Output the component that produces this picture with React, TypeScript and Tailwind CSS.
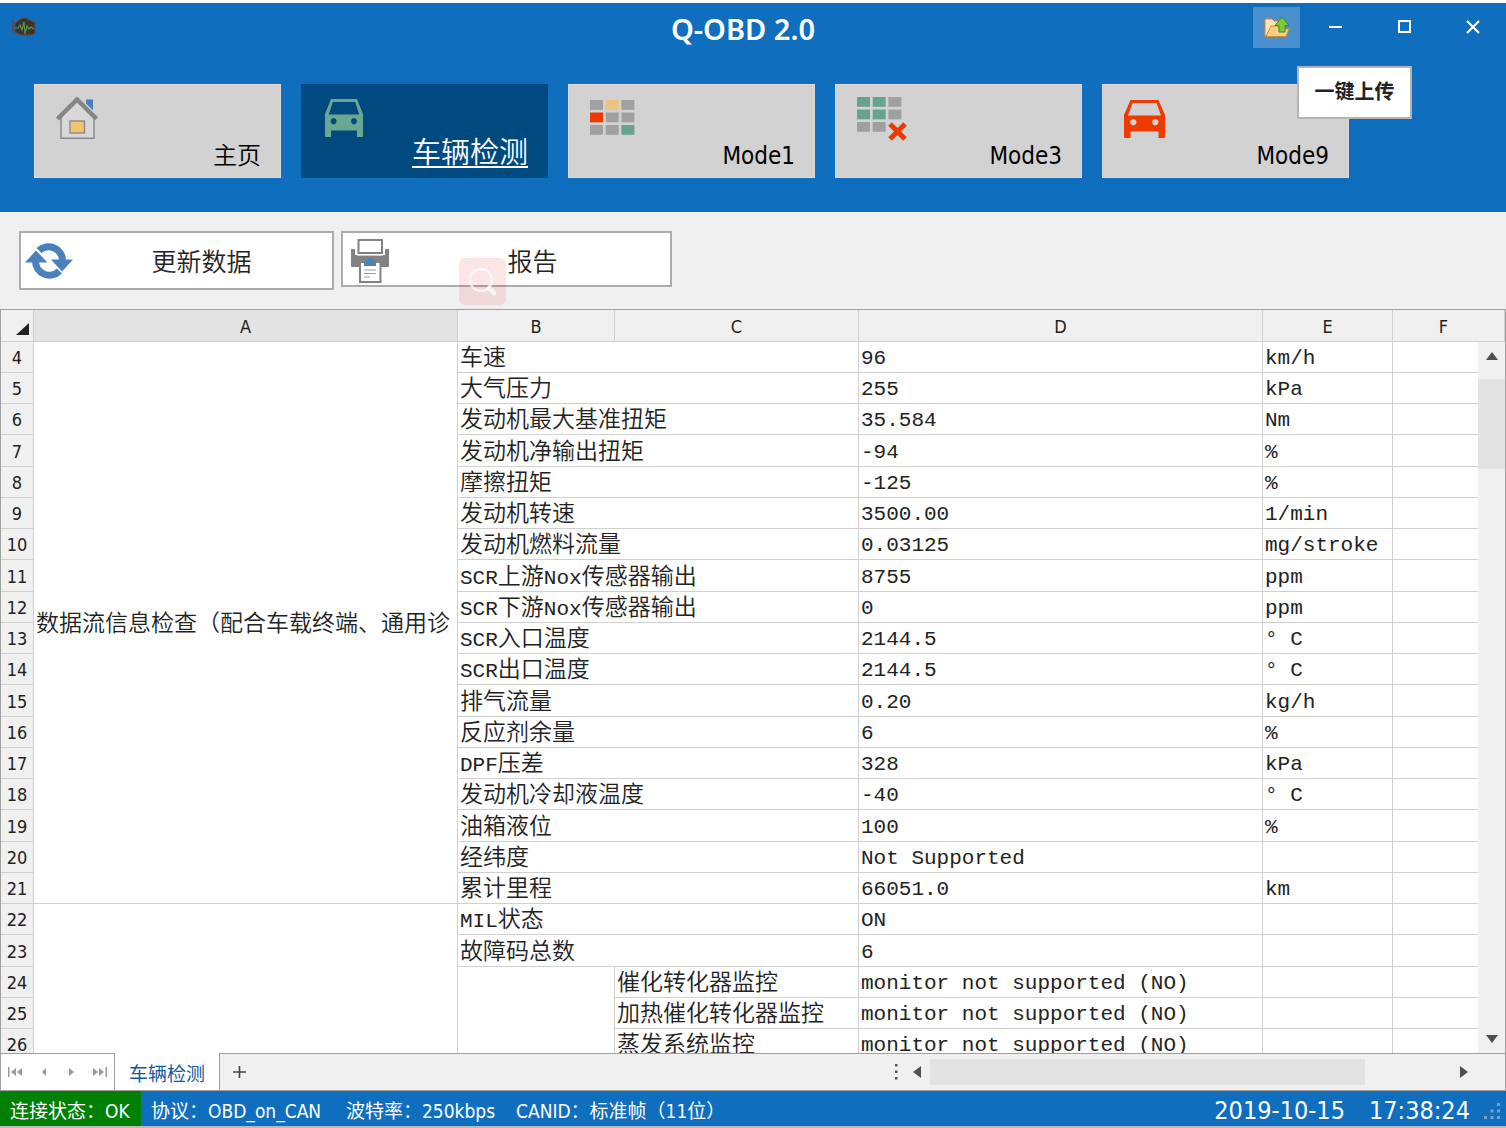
import type { ReactNode } from "react";

const UI = "font-['DejaVu_Sans_Condensed','Noto_Sans_CJK_SC',sans-serif]";

function HouseIcon() {
  return (
    <svg width="42" height="44" viewBox="0 0 42 44" aria-hidden="true">
      <path d="M30 2.5h7v11l-7-7z" fill="#4a80bb" />
      <path d="M5 20v21.3h33V20L21 4z" fill="#d8d8d8" stroke="#888" strokeWidth="1.4" />
      <path d="M1.5 22L21 2.5 40.500 22" fill="none" stroke="#878787" strokeWidth="4.500" />
      <rect x="14" y="24" width="14.500" height="12" fill="#f2c56d" stroke="#8a8a8a" strokeWidth="1.4" />
    </svg>
  );
}

function CarIcon({ color, width }: { color: string; width: number }) {
  return (
    <svg width={width} height="38" viewBox="0 0 41 38" preserveAspectRatio="none" aria-hidden="true">
      <path
        fill={color}
        fillRule="evenodd"
        d="M6.500 0h28L41 15v22q0 1-1 1h-5.500v-6.500h-28V38H1q-1 0-1-1V15zM8.500 3L4 15.500h33L32.500 3zM9.300 19a3.200 3.200 0 1 0 .01 0zM31.300 19a3.200 3.200 0 1 0 .01 0z"
      />
    </svg>
  );
}

const cells = [0, 1, 2, 3, 4, 5, 6, 7, 8];

function TilesIcon({ colors, cross }: { colors: string[]; cross?: boolean }) {
  const height = cross ? 44 : 38;
  return (
    <svg width="51" height={height} viewBox={`0 0 51 ${height}`} aria-hidden="true">
      {cells.map((i) =>
        colors[i] ? (
          <rect key={i} x={(i % 3) * 15.7} y={Math.floor(i / 3) * 12.5} width="13" height="9.8" fill={colors[i]} />
        ) : null
      )}
      {cross && <path d="M33 27l15 15M48 27L33 42" stroke="#ee3a00" strokeWidth="5" />}
    </svg>
  );
}

function EngineIcon() {
  return (
    <svg width="24" height="20" viewBox="0 0 24 20" aria-hidden="true">
      <path d="M1 3v14M1 10h3" stroke="#5f4a42" strokeWidth="1.6" />
      <path d="M3 6l3-2 2-2 3-1h3l3 2 6 2v11l-3 2H8l-5-3z" fill="#37342f" stroke="#6d4a3a" />
      <path d="M3 11h3l2-3 2 5 2-8 1 12 2-8 2 3 2-2 3 2" fill="none" stroke="#5a8f52" strokeWidth="1.2" />
    </svg>
  );
}

function UploadFolderIcon() {
  return (
    <svg width="26" height="22" viewBox="0 0 26 22" aria-hidden="true">
      <path d="M1 20V4q0-1 1-1h6l2 2h8v15z" fill="#fbe3b4" stroke="#d68a2b" />
      <path d="M2 20.500L7 10h7l3 3h8l-3 7.500z" fill="#f9cf85" stroke="#d68a2b" />
      <path d="M18 1l7 8.500h-4V16h-6V9.500h-4z" fill="#7ccb3c" stroke="#3c8a1c" />
    </svg>
  );
}

function RefreshIcon() {
  return (
    <svg width="48" height="36" viewBox="0 0 48 36" aria-hidden="true">
      <path d="M14 7.500A14 14 0 0 1 37.500 17M34.500 28A14 14 0 0 1 10.500 18" fill="none" stroke="#4a80bb" strokeWidth="7" />
      <path d="M26 16.500h22L37 28.500zM0 19.500h22.500L11 7.500z" fill="#4a80bb" />
    </svg>
  );
}

function PrinterIcon() {
  return (
    <svg width="38" height="44" viewBox="0 0 38 44" aria-hidden="true">
      <path d="M0 10h4v6h30v-6h4v17q0 1-1 1H1q-1 0-1-1z" fill="#828282" />
      <rect x="7.500" y="1" width="23.500" height="13" fill="#fff" stroke="#828282" strokeWidth="2" />
      <path d="M6 15.800h26" stroke="#fff" strokeWidth="1.600" />
      <rect x="9" y="23" width="20.500" height="20" fill="#fff" stroke="#828282" strokeWidth="2" />
      <path d="M13 27v-5h3q0-3 3-3t3 3h3v5z" fill="#4a80bb" />
      <path d="M13 31h12M13 34.500h12M13 38h6" stroke="#a0a0a0" strokeWidth="1.2" />
    </svg>
  );
}

function Triangle({ d, color = "#4f4f4f" }: { d: string; color?: string }) {
  return (
    <svg width="14" height="12" viewBox="0 0 14 12" aria-hidden="true">
      <path d={d} fill={color} />
    </svg>
  );
}

function Tile({ icon, label, active }: { icon: ReactNode; label: string; active?: boolean }) {
  return (
    <button
      className={
        active
          ? "flex h-[94px] w-[247px] flex-col items-start bg-[#004a80] pt-3 pr-5 pl-6 text-white"
          : "flex h-[94px] w-[247px] flex-col items-start border border-[#dfd8d2] bg-[#d2d2d2] pt-3 pr-[19px] pl-[21px] text-black"
      }
    >
      <span className="flex h-11 items-center">{icon}</span>
      <span
        className={
          active ? "self-end border-b-2 border-white text-[29px] leading-[26px] font-[350]" : "self-end text-2xl leading-[30px] font-[350]"
        }
      >
        {label}
      </span>
    </button>
  );
}

const G = "#a0a0a0";
const R = "#ee3a00";
const N = "#68a38e";

type Row = { n: number; b?: string; c?: string; d: string; e: string };
const rows: Row[] = [
  { n: 4, b: "车速", d: "96", e: "km/h" },
  { n: 5, b: "大气压力", d: "255", e: "kPa" },
  { n: 6, b: "发动机最大基准扭矩", d: "35.584", e: "Nm" },
  { n: 7, b: "发动机净输出扭矩", d: "-94", e: "%" },
  { n: 8, b: "摩擦扭矩", d: "-125", e: "%" },
  { n: 9, b: "发动机转速", d: "3500.00", e: "1/min" },
  { n: 10, b: "发动机燃料流量", d: "0.03125", e: "mg/stroke" },
  { n: 11, b: "SCR上游Nox传感器输出", d: "8755", e: "ppm" },
  { n: 12, b: "SCR下游Nox传感器输出", d: "0", e: "ppm" },
  { n: 13, b: "SCR入口温度", d: "2144.5", e: "° C" },
  { n: 14, b: "SCR出口温度", d: "2144.5", e: "° C" },
  { n: 15, b: "排气流量", d: "0.20", e: "kg/h" },
  { n: 16, b: "反应剂余量", d: "6", e: "%" },
  { n: 17, b: "DPF压差", d: "328", e: "kPa" },
  { n: 18, b: "发动机冷却液温度", d: "-40", e: "° C" },
  { n: 19, b: "油箱液位", d: "100", e: "%" },
  { n: 20, b: "经纬度", d: "Not Supported", e: "" },
  { n: 21, b: "累计里程", d: "66051.0", e: "km" },
  { n: 22, b: "MIL状态", d: "ON", e: "" },
  { n: 23, b: "故障码总数", d: "6", e: "" },
  { n: 24, c: "催化转化器监控", d: "monitor not supported (NO)", e: "" },
  { n: 25, c: "加热催化转化器监控", d: "monitor not supported (NO)", e: "" },
  { n: 26, c: "蒸发系统监控", d: "monitor not supported (NO)", e: "" },
];

function Mixed({ text }: { text: string }) {
  return (
    <>
      {text.split(/([A-Za-z]+)/).map((part, i) =>
        /^[A-Za-z]/.test(part) ? (
          <span key={i} className="font-['Liberation_Mono',monospace] text-[21px] leading-4">
            {part}
          </span>
        ) : (
          part
        )
      )}
    </>
  );
}

const cell = "border-r border-b border-[#d0d0d0] pl-0.5 text-left leading-[26px] whitespace-nowrap";
const cjk = "pb-1 font-['Noto_Sans_CJK_SC',sans-serif] text-[23px] font-[350]";
const mono = "pt-1 font-['Liberation_Mono',monospace] text-[21px]";
const head = "h-8 border-r border-b border-[#d0d0d0] pt-0.5 text-center text-lg font-normal leading-6";

function Sheet() {
  return (
    <div className="relative min-h-0 flex-1 overflow-hidden border-t border-r border-l border-[#a0a0a0] bg-white">
      <table className="w-full table-fixed border-separate border-spacing-0 text-[#222]">
        <colgroup>
          <col className="w-[33px]" />
          <col className="w-[424px]" />
          <col className="w-[157px]" />
          <col className="w-[244px]" />
          <col className="w-[404px]" />
          <col className="w-[130px]" />
          <col />
        </colgroup>
        <thead>
          <tr className="bg-[#f0f0f0]">
            <th className={head} aria-label="全选">
              <svg className="mt-1 ml-auto mr-1" width="13" height="12" viewBox="0 0 13 12" aria-hidden="true">
                <path d="M13 0v12H0z" fill="#222" />
              </svg>
            </th>
            <th className={head + " bg-[#e3e3e3]"}>A</th>
            <th className={head}>B</th>
            <th className={head}>C</th>
            <th className={head}>D</th>
            <th className={head}>E</th>
            <th className={head + " pr-2.5"}>F</th>
          </tr>
        </thead>
        <tbody>
          {rows.map((r, i) => (
            <tr key={r.n} className={i % 4 === 3 ? "h-8" : "h-[31px]"}>
              <th className="border-r border-b border-[#d0d0d0] bg-[#f0f0f0] pt-0.5 text-center text-lg leading-6 font-normal">{r.n}</th>
              {i === 0 && (
                <td rowSpan={18} className={cell + " " + cjk}>
                  数据流信息检查（配合车载终端、通用诊
                </td>
              )}
              {i === 18 && <td rowSpan={5} className={cell} />}
              {r.b && (
                <td colSpan={2} className={cell + " " + cjk}>
                  <Mixed text={r.b} />
                </td>
              )}
              {i === 20 && <td rowSpan={3} className={cell} />}
              {r.c && <td className={cell + " " + cjk}>{r.c}</td>}
              <td className={cell + " " + mono}>{r.d}</td>
              <td className={cell + " " + mono}>{r.e}</td>
              <td className={cell} />
            </tr>
          ))}
        </tbody>
      </table>
      <div className="absolute top-8 right-0 bottom-0 flex w-[27px] flex-col items-center bg-[#f0f0f0]">
        <button className="flex h-[37px] w-full items-center justify-center pb-2.5" aria-label="向上滚动">
          <Triangle d="M7 2l6 8H1z" />
        </button>
        <div className="h-[90px] w-full bg-[#e3e3e3]" />
        <button className="mt-auto flex h-7 w-full items-center justify-center" aria-label="向下滚动">
          <Triangle d="M7 10l6-8H1z" />
        </button>
      </div>
    </div>
  );
}

function TabBar() {
  return (
    <div className="flex h-[38px] shrink-0 border-r border-b border-l border-[#a0a0a0] bg-[#f0f0f0]">
      <div className="flex w-[114px] items-center justify-between border-t border-r border-[#a0a0a0] bg-white px-1.5">
        <button aria-label="第一张">
          <svg width="16" height="12" viewBox="0 0 16 12" aria-hidden="true">
            <path d="M1 1h1.500v10H1zM9 2v8L4 6zM15 2v8l-5-4z" fill="#999" />
          </svg>
        </button>
        <button aria-label="上一张">
          <Triangle d="M9 2v8L5 6z" color="#999" />
        </button>
        <button aria-label="下一张">
          <Triangle d="M5 2v8l5-4z" color="#999" />
        </button>
        <button aria-label="最后一张">
          <svg width="16" height="12" viewBox="0 0 16 12" aria-hidden="true">
            <path d="M15 1h-1.500v10H15zM7 2v8l5-4zM1 2v8l5-4z" fill="#999" />
          </svg>
        </button>
      </div>
      <button className="w-[105px] border-r border-[#a0a0a0] bg-white pt-1 text-[19px] leading-7 text-[#0f5a9f]">车辆检测</button>
      <div className="flex flex-1 items-center border-t border-[#a0a0a0]">
        <button className="px-3 text-[#333]" aria-label="新建工作表">
          <svg width="14" height="14" viewBox="0 0 14 14" aria-hidden="true">
            <path d="M7.500 1v12M1 7h13" stroke="#444" strokeWidth="1.6" />
          </svg>
        </button>
        <div className="ml-auto flex items-center gap-3">
          <svg width="4" height="18" viewBox="0 0 4 18" aria-hidden="true">
            <path d="M1 1h2.500v2.500H1zM1 7.500h2.500V10H1zM1 14h2.500v2.500H1z" fill="#555" />
          </svg>
          <button aria-label="向左滚动">
            <Triangle d="M11 0v12L3 6z" />
          </button>
        </div>
        <div className="ml-1.5 h-[26px] w-[435px] bg-[#e3e3e3]" />
        <button className="mr-[34px] ml-[92px]" aria-label="向右滚动">
          <Triangle d="M3 0v12l8-6z" />
        </button>
      </div>
    </div>
  );
}

const statusItem = "flex h-full items-center pt-1";

function StatusBar() {
  return (
    <footer className="flex h-[35px] shrink-0 items-center bg-[#0f6ebe] text-[19px] leading-7 whitespace-pre text-white">
      <div className={statusItem + " w-[141px] bg-[#008000] pl-2.5"}>连接状态：OK</div>
      <div className={statusItem + " ml-2.5 w-[195px]"}>协议：OBD_on_CAN</div>
      <div className={statusItem + " w-[170px]"}>波特率：250kbps</div>
      <div className={statusItem}>CANID：标准帧（11位）</div>
      <div className={statusItem + " ml-auto gap-6 text-[25px]"}>
        <span>2019-10-15</span>
        <span>17:38:24</span>
      </div>
      <svg className="mt-1 mr-1.5 ml-3.5" width="16" height="16" viewBox="0 0 16 16" aria-hidden="true">
        <path d="M13 0h3v3h-3zM6.500 6.500h3v3h-3zM13 6.500h3v3h-3zM0 13h3v3H0zM6.500 13h3v3h-3zM13 13h3v3h-3z" fill="#7f9fbd" />
      </svg>
    </footer>
  );
}

export default function App() {
  return (
    <div className={"flex h-screen flex-col overflow-hidden border-t-[3px] border-b-2 border-t-white border-b-[#b8bcc0] bg-[#f0f0f0] " + UI}>
      <header className="h-[209px] shrink-0 bg-[#0f6ebe]">
        <div className="flex h-12 items-center pl-3">
          <EngineIcon />
          <h1 className="flex-1 pt-1 pl-[197px] text-center font-['Noto_Sans',sans-serif] text-[29px] leading-8 font-semibold text-white">
            Q-OBD 2.0
          </h1>
          <div className="relative flex items-center">
            <button className="flex h-[41px] w-[47px] items-center justify-center bg-[#4a90cf]" aria-label="一键上传" aria-describedby="upload-tip">
              <UploadFolderIcon />
            </button>
            <div
              id="upload-tip"
              role="tooltip"
              className="absolute top-[59px] left-11 z-10 flex h-[53px] w-[115px] items-center justify-center border-2 border-[#b4b4b4] bg-white text-xl font-bold text-[#222]"
            >
              一键上传
            </div>
            <button className="flex h-10 w-[71px] items-center justify-center" aria-label="最小化">
              <svg width="14" height="14" viewBox="0 0 14 14" aria-hidden="true">
                <path d="M0 7h13" stroke="#fff" strokeWidth="2" />
              </svg>
            </button>
            <button className="flex h-10 w-[68px] items-center justify-center" aria-label="最大化">
              <svg width="14" height="14" viewBox="0 0 14 14" aria-hidden="true">
                <rect x="1" y="1" width="11" height="11" fill="none" stroke="#fff" strokeWidth="2" />
              </svg>
            </button>
            <button className="flex h-10 w-[67px] items-center justify-center" aria-label="关闭">
              <svg width="14" height="14" viewBox="0 0 14 14" aria-hidden="true">
                <path d="M1 1l12 12M13 1L1 13" stroke="#fff" strokeWidth="2.200" />
              </svg>
            </button>
          </div>
        </div>
        <nav className="mt-[33px] flex gap-5 pl-[34px]">
          <Tile icon={<HouseIcon />} label="主页" />
          <Tile icon={<CarIcon color="#6aa792" width={38} />} label="车辆检测" active />
          <Tile icon={<TilesIcon colors={[G, "#ebc27e", G, R, G, G, G, G, N]} />} label="Mode1" />
          <Tile icon={<TilesIcon colors={[N, N, G, N, N, G, G, G, ""]} cross />} label="Mode3" />
          <Tile icon={<CarIcon color="#ee3a00" width={41} />} label="Mode9" />
        </nav>
      </header>
      <div className="flex h-[97px] shrink-0 items-start gap-[7px] border-t border-[#f7f1ec] pt-[18px] pl-[19px] text-[25px] leading-8 text-[#222]">
        <button className="flex h-[59px] w-[315px] items-center border-2 border-[#acacac] bg-white pl-1">
          <RefreshIcon />
          <span className="flex-1 pt-1 pr-0.5 text-center font-[350]">更新数据</span>
        </button>
        <button className="relative flex h-14 w-[331px] items-center border-2 border-[#acacac] bg-white pt-1 pl-2">
          <PrinterIcon />
          <span className="flex-1 pt-1 pl-1.5 text-center font-[350]">报告</span>
          <span className="absolute top-[25px] left-[116px] flex size-[47px] items-center justify-center rounded-md bg-[#e60000]/10">
            <svg width="30" height="30" viewBox="0 0 30 30" aria-hidden="true">
              <circle cx="13" cy="13" r="11" fill="none" stroke="#fff" strokeOpacity=".7" strokeWidth="2.500" />
              <path d="M21 21l5 5" stroke="#fff" strokeOpacity=".7" strokeWidth="5" strokeLinecap="round" />
            </svg>
          </span>
        </button>
      </div>
      <Sheet />
      <TabBar />
      <StatusBar />
    </div>
  );
}
